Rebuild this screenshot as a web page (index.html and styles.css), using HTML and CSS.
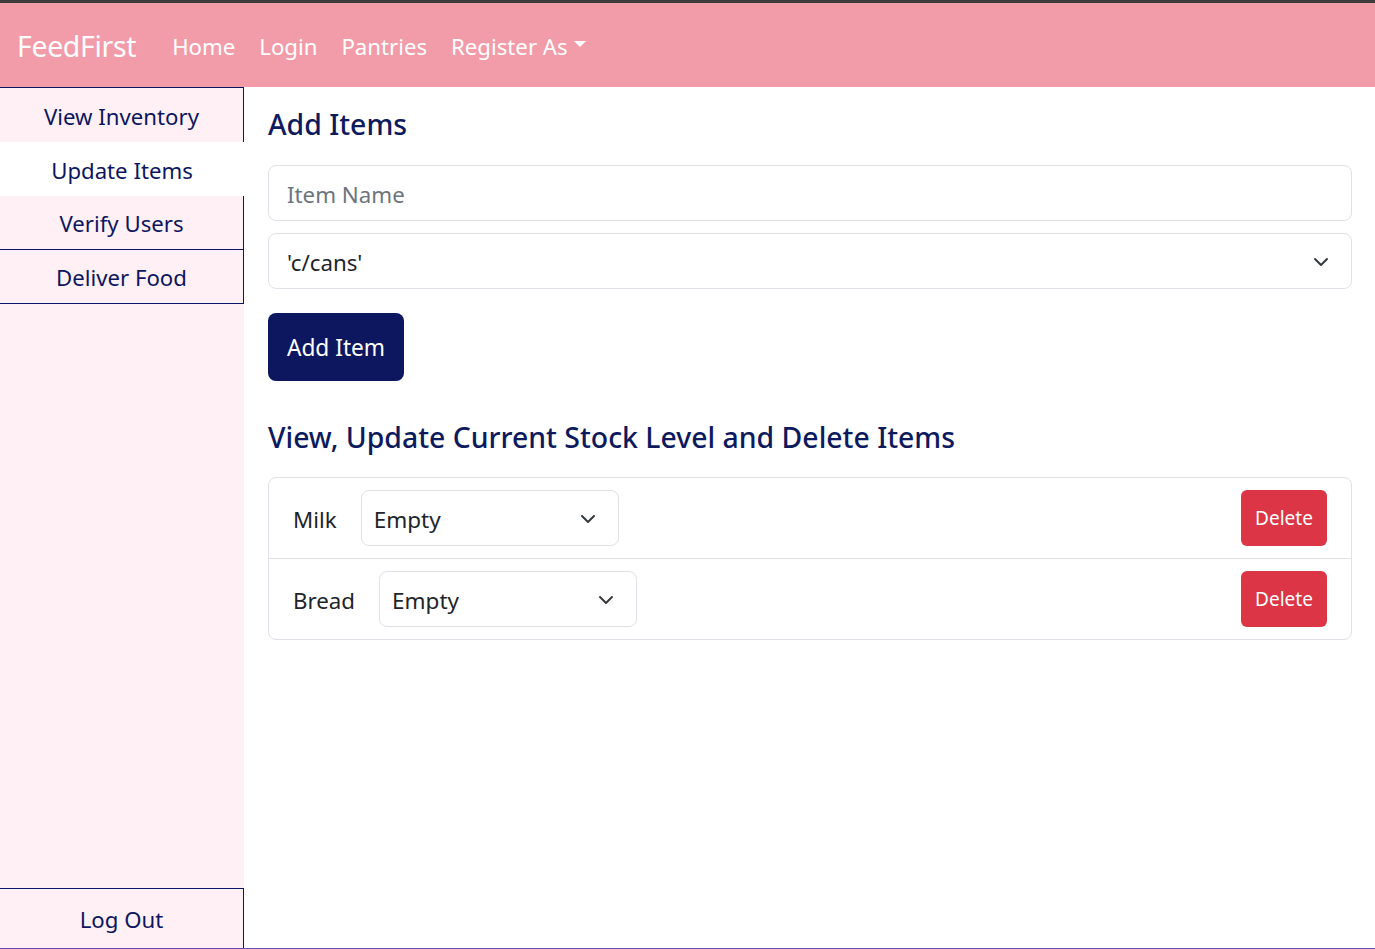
FILE: index.html
```html
<!DOCTYPE html>
<html lang="en">
<head>
<meta charset="utf-8">
<title>FeedFirst</title>
<link rel="stylesheet" href="styles.css">
</head>
<body>
<div class="frame">
  <nav class="navbar">
    <a class="brand" href="#">FeedFirst</a>
    <ul class="nav-links">
      <li><a href="#">Home</a></li>
      <li><a href="#">Login</a></li>
      <li><a href="#">Pantries</a></li>
      <li><a href="#" class="dropdown">Register As<span class="caret"></span></a></li>
    </ul>
  </nav>
  <div class="layout">
    <aside class="sidebar">
      <div class="side-menu">
        <a href="#" class="side-item first">View Inventory</a>
        <a href="#" class="side-item active">Update Items</a>
        <a href="#" class="side-item">Verify Users</a>
        <a href="#" class="side-item">Deliver Food</a>
      </div>
      <a href="#" class="side-item logout">Log Out</a>
    </aside>
    <main class="content">
      <h2 class="heading first-heading">Add Items</h2>
      <div class="field input-field"><span class="placeholder">Item Name</span></div>
      <div class="field select-field">
        <span class="value">'c/cans'</span>
        <svg class="chev" viewBox="0 0 16 16" width="16" height="16"><path d="M2 5l6 6 6-6" fill="none" stroke="#343a40" stroke-width="2" stroke-linecap="round" stroke-linejoin="round"/></svg>
      </div>
      <button class="btn-primary">Add Item</button>
      <h2 class="heading second-heading">View, Update Current Stock Level and Delete Items</h2>
      <ul class="list">
        <li class="row">
          <span class="label">Milk</span>
          <div class="small-select">
            <span class="value">Empty</span>
            <svg class="chev" viewBox="0 0 16 16" width="16" height="16"><path d="M2 5l6 6 6-6" fill="none" stroke="#343a40" stroke-width="2" stroke-linecap="round" stroke-linejoin="round"/></svg>
          </div>
          <button class="btn-danger">Delete</button>
        </li>
        <li class="row">
          <span class="label">Bread</span>
          <div class="small-select">
            <span class="value">Empty</span>
            <svg class="chev" viewBox="0 0 16 16" width="16" height="16"><path d="M2 5l6 6 6-6" fill="none" stroke="#343a40" stroke-width="2" stroke-linecap="round" stroke-linejoin="round"/></svg>
          </div>
          <button class="btn-danger">Delete</button>
        </li>
      </ul>
    </main>
  </div>
</div>
</body>
</html>
```
FILE: styles.css
```css
* { box-sizing: border-box; }
html, body { margin: 0; padding: 0; }
body {
  font-family: "Noto Sans", "Open Sans", sans-serif;
  background: #ffffff;
  color: #212529;
}
.frame {
  height: 949px;
  border-top: 3px solid #3c3c3c;
  border-bottom: 1px solid #6a4cb8;
  display: flex;
  flex-direction: column;
  overflow: hidden;
}
.navbar {
  height: 84px;
  flex: none;
  background: #f29ca9;
  display: flex;
  align-items: center;
  padding-left: 17px;
  padding-top: 2px;
}
.brand {
  color: #fff;
  text-decoration: none;
  font-size: 28.4px;
  margin-right: 36px;
  letter-spacing: -0.3px;
}
.nav-links {
  list-style: none;
  margin: 0;
  padding: 0;
  display: flex;
  gap: 24px;
}
.nav-links a {
  color: #fff;
  text-decoration: none;
  font-size: 22.2px;
  display: inline-flex;
  align-items: center;
}
.caret {
  display: inline-block;
  margin-left: 6px;
  border-top: 6px solid #fff;
  border-left: 6px solid transparent;
  border-right: 6px solid transparent;
  position: relative;
  top: -2px;
}
.layout {
  flex: 1;
  display: flex;
  min-height: 0;
}
.sidebar {
  width: 244px;
  flex: none;
  background: #fff0f5;
  display: flex;
  flex-direction: column;
  justify-content: space-between;
}
.side-menu { display: flex; flex-direction: column; }
.side-item {
  display: flex;
  align-items: center;
  justify-content: center;
  height: 54px;
  color: #0d1660;
  text-decoration: none;
  font-size: 22.2px;
  border-right: 1px solid #0d1660;
  border-bottom: 1px solid #0d1660;
  padding-top: 2px;
}
.side-item.first {
  height: 55px;
  border-top: 1px solid #0d1660;
  border-bottom: none;
}
.side-item.active {
  background: #fff;
  border: none;
}
.side-item.logout {
  height: 60px;
  border-top: 1px solid #0d1660;
  border-bottom: none;
}
.content {
  flex: 1;
  padding: 0 23px 0 24px;
}
.heading {
  color: #0d1a5e;
  font-weight: 500;
  font-size: 28.4px;
  line-height: 36px;
  margin: 0;
}
.first-heading { margin-top: 19px; margin-bottom: 23px; }
.field {
  height: 56px;
  border: 1px solid #dee2e6;
  border-radius: 8px;
  display: flex;
  align-items: center;
  padding: 2px 22px 0 18px;
  font-size: 22.3px;
}
.placeholder { color: #6c757d; }
.select-field {
  margin-top: 12px;
  justify-content: space-between;
  color: #212529;
}
.chev { flex: none; }
.btn-primary {
  margin-top: 24px;
  height: 68px;
  width: 136px;
  border: none;
  border-radius: 8px;
  background: #0d1760;
  color: #fff;
  font-family: inherit;
  font-size: 22.7px;
  display: block;
  padding-top: 2px;
}
.second-heading { margin-top: 38px; margin-bottom: 22px; }
.list {
  list-style: none;
  margin: 0;
  padding: 0;
  border: 1px solid #dee2e6;
  border-radius: 8px;
}
.row {
  display: flex;
  align-items: center;
  padding: 12px 24px;
  height: 80px;
}
.row + .row { border-top: 1px solid #dee2e6; height: 81px; }
.label {
  font-size: 22.3px;
  margin-right: 24px;
  color: #212529;
  padding-top: 2px;
}
.small-select {
  width: 258px;
  height: 56px;
  border: 1px solid #dee2e6;
  border-radius: 8px;
  display: flex;
  align-items: center;
  justify-content: space-between;
  padding: 2px 22px 0 12px;
  font-size: 22.5px;
}
.btn-danger {
  margin-left: auto;
  width: 86px;
  height: 56px;
  border: none;
  border-radius: 6px;
  background: #dc3545;
  color: #fff;
  font-family: inherit;
  font-size: 19px;
}
```
